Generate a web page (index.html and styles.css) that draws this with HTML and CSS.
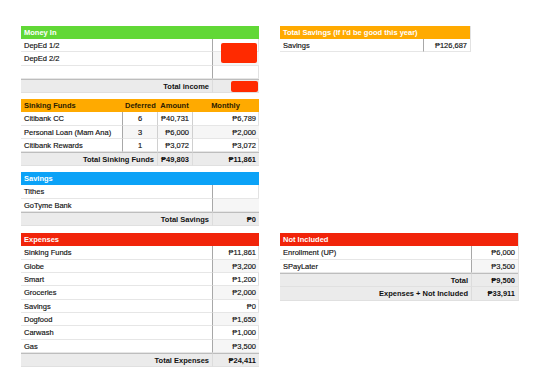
FILE: index.html
```html
<!DOCTYPE html>
<html>
<head>
<meta charset="utf-8">
<link rel="stylesheet" href="styles.css">
</head>
<body>
<div class="sheet">
  <div class="left-stack">
    <div class="tbl two">
      <div class="hdr green span2">Money In</div>
      <div class="c lbl">DepEd 1/2</div><div class="c val redact-host"><span class="redact big"></span></div>
      <div class="c lbl">DepEd 2/2</div><div class="c val alt"></div>
      <div class="c lbl"></div><div class="c val"></div>
      <div class="c tot lbl r">Total income</div><div class="c tot val redact-host"><span class="redact small"></span></div>
    </div>

    <div class="tbl sink">
      <div class="hdr orange">Sinking Funds</div>
      <div class="hdr orange ctr">Deferred</div>
      <div class="hdr orange ctr">Amount</div>
      <div class="hdr orange ctr">Monthly</div>

      <div class="c lbl">Citibank CC</div><div class="c mid ctr">6</div><div class="c val sep">₱40,731</div><div class="c val sep">₱6,789</div>
      <div class="c lbl">Personal Loan (Mam Ana)</div><div class="c mid ctr alt">3</div><div class="c val sep alt">₱6,000</div><div class="c val sep alt">₱2,000</div>
      <div class="c lbl">Citibank Rewards</div><div class="c mid ctr">1</div><div class="c val sep">₱3,072</div><div class="c val sep">₱3,072</div>

      <div class="c tot lbl r span2">Total Sinking Funds</div><div class="c tot val">₱49,803</div><div class="c tot val">₱11,861</div>
    </div>

    <div class="tbl two">
      <div class="hdr blue span2">Savings</div>
      <div class="c lbl">Tithes</div><div class="c val"></div>
      <div class="c lbl">GoTyme Bank</div><div class="c val alt"></div>
      <div class="c tot lbl r">Total Savings</div><div class="c tot val">₱0</div>
    </div>
  </div>

  <div class="right-top">
    <div class="tbl goal">
      <div class="hdr orange span2">Total Savings (If I'd be good this year)</div>
      <div class="c lbl">Savings</div><div class="c val">₱126,687</div>
    </div>
  </div>

  <div class="tbl two">
    <div class="hdr red span2">Expenses</div>
    <div class="c lbl">Sinking Funds</div><div class="c val">₱11,861</div>
    <div class="c lbl">Globe</div><div class="c val alt">₱3,200</div>
    <div class="c lbl">Smart</div><div class="c val">₱1,200</div>
    <div class="c lbl">Groceries</div><div class="c val alt">₱2,000</div>
    <div class="c lbl">Savings</div><div class="c val">₱0</div>
    <div class="c lbl">Dogfood</div><div class="c val alt">₱1,650</div>
    <div class="c lbl">Carwash</div><div class="c val">₱1,000</div>
    <div class="c lbl">Gas</div><div class="c val alt">₱3,500</div>
    <div class="c tot lbl r">Total Expenses</div><div class="c tot val">₱24,411</div>
  </div>

  <div class="right-bottom">
    <div class="tbl two">
      <div class="hdr red span2">Not Included</div>
      <div class="c lbl">Enrollment (UP)</div><div class="c val">₱6,000</div>
      <div class="c lbl">SPayLater</div><div class="c val alt">₱3,500</div>
      <div class="c tot lbl r">Total</div><div class="c tot val">₱9,500</div>
      <div class="c tot2 lbl r">Expenses + Not Included</div><div class="c tot2 val">₱33,911</div>
    </div>
  </div>
</div>
</body>
</html>
```

FILE: styles.css
```css
html, body {
  margin: 0;
  padding: 0;
  background: #ffffff;
}

body {
  font-family: "Liberation Sans", Arial, "DejaVu Sans", sans-serif;
  font-size: 7.5px;
  color: #111111;
  -webkit-text-stroke: 0.15px currentColor;
}

.sheet {
  padding: 26px 0 0 21px;
  display: grid;
  grid-template-columns: 238px 238px;
  column-gap: 21px;
  row-gap: 7px;
  align-items: start;
}

.left-stack {
  display: flex;
  flex-direction: column;
  gap: 6px;
}

.tbl {
  display: grid;
  border-right: 1px solid #e2e2e2;
}

.two {
  grid-template-columns: 191px 47px;
}

.sink {
  grid-template-columns: 101px 35px 35px 67px;
}

.goal {
  grid-template-columns: 143px 47px;
  width: 190px;
}

.hdr {
  height: 13px;
  line-height: 13px;
  padding: 0 3px;
  color: #ffffff;
  font-weight: bold;
  white-space: nowrap;
  -webkit-text-stroke: 0;
}

.sink .hdr {
  color: #2a2000;
}

.green { background: #61d836; }
.orange { background: #ffaa00; }
.blue { background: #0ba2f7; }
.red { background: #f1240a; }

.span2 { grid-column: span 2; }

.c {
  height: 13.4px;
  line-height: 13.4px;
  padding: 0 3px;
  box-sizing: border-box;
  border-bottom: 1px solid #e6e6e6;
  white-space: nowrap;
  overflow: hidden;
}

.lbl {
  text-align: left;
}

.val {
  text-align: right;
  border-left: 1px solid #a8a8a8;
}

.mid {
  border-left: 1px solid #a8a8a8;
}

.sink .val {
  border-left: 1px solid #d0d0d0;
}

.ctr { text-align: center; }
.r { text-align: right; }

.alt.val, .alt.mid {
  background: #f6f6f6;
}

.tot {
  background: #ebebeb;
  font-weight: bold;
  height: 14px;
  line-height: 13px;
  border-top: 1px solid #bdbdbd;
  border-bottom: 1px solid #e0e0e0;
  -webkit-text-stroke: 0;
}

.tot.val, .tot2.val {
  border-left: 1px solid #dcdcdc;
}

.tot2 {
  background: #ebebeb;
  font-weight: bold;
  height: 14px;
  line-height: 14px;
  border-bottom: 1px solid #e0e0e0;
  -webkit-text-stroke: 0;
}

.redact-host {
  position: relative;
  overflow: visible;
}

.redact {
  position: absolute;
  background: #ff2a00;
  border-radius: 2px;
}

.redact.big {
  left: 8px;
  top: 4px;
  width: 36px;
  height: 20px;
  z-index: 2;
}

.redact.small {
  left: 18px;
  top: 1px;
  width: 27px;
  height: 11px;
}

.right-top, .right-bottom {
  display: flex;
}
```
